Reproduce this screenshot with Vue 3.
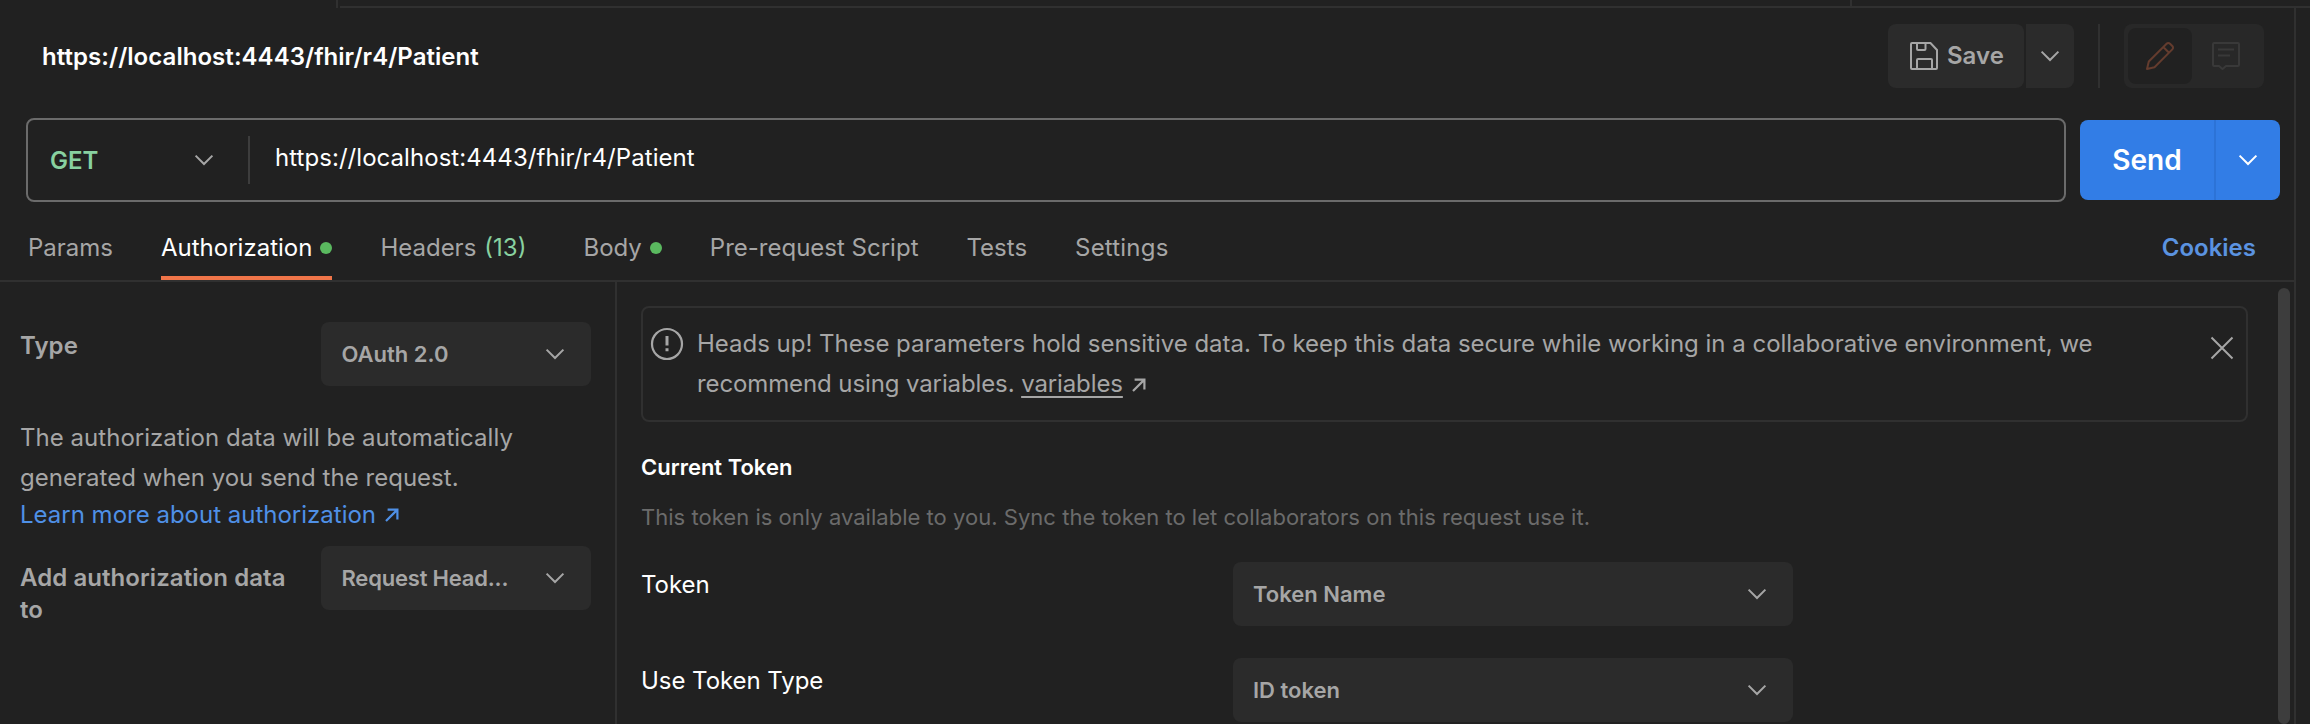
<script setup>
import { h } from 'vue'

const Chevron = () =>
  h('svg', { width: 20, height: 12, viewBox: '0 0 20 12', fill: 'none', stroke: 'currentColor', 'stroke-width': 2 }, [
    h('path', { d: 'M1.6 1.6 10 10l8.4-8.4' }),
  ])

const Arrow = () =>
  h('svg', { width: 14, height: 14, viewBox: '0 0 14 14', fill: 'none', stroke: 'currentColor', 'stroke-width': 2.2 }, [
    h('path', { d: 'M2.6 1.6H12.4V11.4M12.4 1.6 1 13' }),
  ])

const tabs = [
  { label: 'Params' },
  { label: 'Authorization', dot: true, active: true },
  { label: 'Headers', count: '(13)' },
  { label: 'Body', dot: true },
  { label: 'Pre-request Script' },
  { label: 'Tests' },
  { label: 'Settings' },
]

const fields = [
  { label: 'Token', value: 'Token Name' },
  { label: 'Use Token Type', value: 'ID token' },
]
</script>

<template>
  <div class="window">
    <div class="strip">
      <div class="strip-tab"></div>
      <div class="strip-rest"></div>
      <div class="strip-end"></div>
    </div>
    <div class="main">
      <div class="request">
        <header class="title-row">
          <h1>https://localhost:4443/fhir/r4/Patient</h1>
          <div class="actions">
            <button class="btn save">
              <svg width="28" height="28" viewBox="0 0 28 28" fill="none" stroke="currentColor" stroke-width="2">
                <path d="M2 1h18.5L27 8v18a1 1 0 0 1-1 1H2a1 1 0 0 1-1-1V2a1 1 0 0 1 1-1Z" />
                <path d="M7 1v6a1 1 0 0 0 1 1h6.500a1 1 0 0 0 1-1V1M7 27v-9a1 1 0 0 1 1-1h13a1 1 0 0 1 1 1v9" />
              </svg>
              <span>Save</span>
            </button>
            <button class="btn save-more"><Chevron /></button>
            <div class="divider"></div>
            <div class="modes">
              <div class="mode active">
                <svg width="30" height="30" viewBox="0 0 30 30" fill="none" stroke="currentColor" stroke-width="2" stroke-linejoin="round">
                  <path d="M2 28 3.800 20.500 21.600 2.700a2.400 2.400 0 0 1 3.400 0l2.300 2.300a2.400 2.400 0 0 1 0 3.400L9.500 26.200 2 28ZM18.300 6l5.700 5.700" />
                </svg>
              </div>
              <div class="mode comment">
                <svg width="28" height="28" viewBox="0 0 28 28" fill="none" stroke="currentColor" stroke-width="2">
                  <path d="M2 1h24a1 1 0 0 1 1 1v21a1 1 0 0 1-1 1H14l-3.500 3L7 24H2a1 1 0 0 1-1-1V2a1 1 0 0 1 1-1ZM6 7.500h16M6 13.500h12" />
                </svg>
              </div>
            </div>
          </div>
        </header>

        <div class="url-row">
          <div class="url-box">
            <div class="method"><span>GET</span><Chevron /></div>
            <div class="url">https://localhost:4443/fhir/r4/Patient</div>
          </div>
          <div class="send">
            <span class="send-label">Send</span>
            <span class="send-more"><Chevron /></span>
          </div>
        </div>

        <nav class="tabs">
          <div v-for="t in tabs" :key="t.label" class="tab" :class="{ active: t.active }">
            <span>{{ t.label }}</span>
            <span v-if="t.count" class="count">{{ t.count }}</span>
            <i v-if="t.dot" class="dot"></i>
          </div>
          <a class="cookies">Cookies</a>
        </nav>

        <div class="body">
          <aside class="side">
            <div class="side-row">
              <label>Type</label>
              <div class="select"><span>OAuth 2.0</span><Chevron /></div>
            </div>
            <p class="hint">The authorization data will be automatically<br />generated when you send the request.</p>
            <a class="learn"><span>Learn more about authorization</span><Arrow /></a>
            <div class="side-row placement">
              <label>Add authorization data to</label>
              <div class="select"><span>Request Head...</span><Chevron /></div>
            </div>
          </aside>

          <section class="content">
            <div class="notice">
              <svg class="alert" width="34" height="34" viewBox="0 0 34 34" fill="none" stroke="currentColor" stroke-width="2.200">
                <circle cx="17" cy="17" r="15" />
                <path d="M17 9v9.500M17 21.300v3" stroke-width="3" />
              </svg>
              <div class="notice-text">
                <p>Heads up! These parameters hold sensitive data. To keep this data secure while working in a collaborative environment, we</p>
                <p class="tight">recommend using variables. <a>variables</a><Arrow /></p>
              </div>
              <svg class="close" width="24" height="24" viewBox="0 0 24 24" fill="none" stroke="currentColor" stroke-width="2">
                <path d="M1.500 1.500l21 21M22.500 1.500l-21 21" />
              </svg>
            </div>
            <h2>Current Token</h2>
            <p class="sub">This token is only available to you. Sync the token to let collaborators on this request use it.</p>
            <div v-for="f in fields" :key="f.label" class="field">
              <label>{{ f.label }}</label>
              <div class="select wide"><span>{{ f.value }}</span><Chevron /></div>
            </div>
          </section>
          <div class="scrollbar"></div>
        </div>
      </div>
    </div>
  </div>
</template>

<style>
body {
  margin: 0;
  background: #212121;
}
</style>

<style scoped>
* {
  box-sizing: border-box;
}
.window {
  width: 2310px;
  height: 724px;
  overflow: hidden;
  display: flex;
  flex-direction: column;
  background: #212121;
  color: #a6a6a6;
  font: 400 24px/32px Inter, "Liberation Sans", sans-serif;
}
h1, h2, p {
  margin: 0;
}
svg {
  display: block;
  flex: none;
}
.strip {
  display: flex;
  height: 8px;
}
.strip-tab {
  width: 338px;
  border-right: 2px solid #303030;
}
.strip-rest {
  margin-left: 2px;
  width: 1512px;
  border-right: 2px solid #303030;
  border-bottom: 2px solid #303030;
}
.strip-end {
  flex: 1;
  border-bottom: 2px solid #303030;
}
.main {
  display: flex;
  flex: 1;
  min-height: 0;
}
.request {
  width: 2296px;
  border-right: 2px solid #303030;
  display: flex;
  flex-direction: column;
}
.title-row {
  display: flex;
  justify-content: space-between;
  align-items: center;
  height: 64px;
  margin-top: 16px;
  padding: 0 30px 0 42px;
}
h1 {
  padding-top: 2px;
  font-size: 24px;
  line-height: 32px;
  font-weight: 600;
  letter-spacing: 0.05px;
  color: #fff;
}
.actions {
  display: flex;
}
.btn {
  height: 64px;
  border: 0;
  padding: 0;
  background: #2b2b2b;
  color: #a6a6a6;
  font: 600 24px/32px Inter, "Liberation Sans", sans-serif;
  display: flex;
  align-items: center;
}
.save {
  width: 136px;
  padding-left: 22px;
  gap: 9px;
  border-radius: 8px;
}
.save-more {
  width: 48px;
  margin-left: 2px;
  justify-content: center;
  border-radius: 0 8px 8px 0;
}
.divider {
  width: 2px;
  margin: 0 24px;
  background: #303030;
}
.modes {
  width: 140px;
  padding: 4px;
  border-radius: 8px;
  background: #282828;
  display: flex;
  justify-content: space-between;
  color: #393939;
}
.mode {
  width: 64px;
  height: 56px;
  border-radius: 8px;
  display: flex;
  align-items: center;
  justify-content: center;
}
.mode.comment {
  padding-right: 4px;
}
.mode.active {
  background: #212121;
  color: #643c2e;
}
.url-row {
  display: flex;
  align-items: center;
  margin-top: 30px;
  height: 84px;
  padding-left: 26px;
}
.url-box {
  width: 2040px;
  height: 84px;
  border: 2px solid #6b6b6b;
  border-radius: 8px;
  display: flex;
  align-items: center;
}
.method {
  width: 222px;
  height: 48px;
  padding: 0 34px 0 22px;
  border-right: 2px solid #3d3d3d;
  display: flex;
  align-items: center;
  justify-content: space-between;
  color: #a6a6a6;
}
.method span {
  padding-top: 2px;
  font-weight: 600;
  color: #88d1a0;
}
.url {
  padding: 0 0 5px 25px;
  letter-spacing: 0.05px;
  color: #fff;
}
.send {
  width: 200px;
  height: 80px;
  margin-left: 14px;
  border-radius: 8px;
  background: #327de6;
  color: #fff;
  display: flex;
}
.send-label {
  width: 136px;
  border-right: 2px solid #2c73d7;
  font-size: 28px;
  line-height: 80px;
  font-weight: 600;
  text-align: center;
}
.send-more {
  flex: 1;
  display: flex;
  align-items: center;
  justify-content: center;
}
.tabs {
  display: flex;
  gap: 48px;
  height: 80px;
  padding: 0 38px 0 28px;
  border-bottom: 2px solid #303030;
}
.tab {
  display: flex;
  align-items: center;
  height: 78px;
  padding-top: 18px;
  border-bottom: 4px solid transparent;
}
.tab:nth-child(7) {
  letter-spacing: 0.2px;
}
.tab.active {
  color: #fff;
  border-color: #f07549;
}
.count {
  margin: 0 9px 0 8px;
  color: #88d1a0;
}
.dot {
  width: 12px;
  height: 12px;
  margin: 0 0 0 8px;
  border-radius: 50%;
  background: #5ab95f;
}
.cookies {
  margin: 30px 0 0 auto;
  font-weight: 600;
  color: #5b93e0;
}
.body {
  display: flex;
  flex: 1;
  min-height: 0;
}
.side {
  width: 617px;
  padding: 40px 24px 0 20px;
  border-right: 2px solid #303030;
}
.side-row {
  display: flex;
  justify-content: space-between;
  align-items: flex-start;
}
.side-row label {
  width: 280px;
  padding-top: 8px;
  font-weight: 600;
  letter-spacing: 0.07px;
}
.placement label {
  padding-top: 16px;
}
.select {
  width: 270px;
  height: 64px;
  padding: 0 26px 0 20.5px;
  border-radius: 8px;
  background: #2b2b2b;
  display: flex;
  align-items: center;
  justify-content: space-between;
  font-size: 22px;
  font-weight: 600;
}
.placement .select {
  letter-spacing: -0.2px;
}
.select.wide {
  width: 560px;
  padding-left: 20px;
}
.hint {
  margin-top: 32px;
  line-height: 40px;
  letter-spacing: 0.03px;
}
.learn {
  display: flex;
  align-items: center;
  gap: 9px;
  height: 32px;
  margin: 1px 0 15px;
  color: #4f90e6;
}
.content {
  width: 1631px;
  padding: 24px 0 0 24px;
}
.notice {
  display: flex;
  height: 116px;
  padding: 16px 12px 0 7px;
  border: 2px solid #303030;
  border-radius: 8px;
}
.alert {
  margin-top: 3px;
}
.notice-text {
  flex: 1;
  margin-left: 13px;
  line-height: 40px;
  letter-spacing: -0.01px;
  white-space: nowrap;
}
.tight {
  letter-spacing: -0.11px;
}
.notice p svg {
  display: inline-block;
  margin-left: 9px;
}
.notice a {
  text-decoration: underline 2px;
  text-underline-offset: 4px;
  text-decoration-skip-ink: none;
}
.close {
  margin-top: 12px;
}
h2 {
  margin-top: 29px;
  font-size: 22px;
  line-height: 32px;
  font-weight: 600;
  color: #fff;
}
.sub {
  margin-top: 18px;
  font-size: 22px;
  line-height: 32px;
  letter-spacing: 0.025px;
  color: #6b6b6b;
}
.field {
  display: flex;
  align-items: flex-start;
  margin-top: 29px;
}
.field + .field {
  margin-top: 32px;
}
.field label {
  width: 592px;
  padding-top: 7px;
  letter-spacing: -0.05px;
  color: #fff;
}
.scrollbar {
  width: 12px;
  height: 436px;
  margin: 6px 0 0 30px;
  border-radius: 6px;
  background: #3d3d3d;
}
</style>
